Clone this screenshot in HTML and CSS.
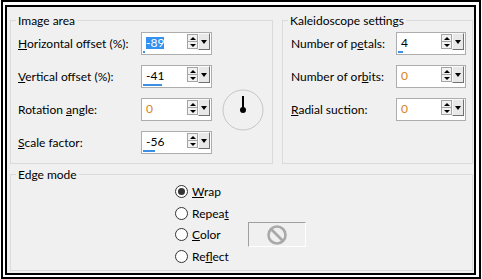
FILE: index.html
```html
<!DOCTYPE html>
<html>
<head>
<meta charset="utf-8">
<link rel="stylesheet" href="styles.css">
</head>
<body>
<div class="outer">
  <div class="dialog">
    <div class="top">
      <div class="group img">
        <div class="title">Image area</div>
        <div class="grid img-grid">
          <div class="lbl"><u>H</u>orizontal offset (%):</div>
          <div class="spin"><div class="val"><span class="num sel">-89</span><span class="bar" style="width:2px"></span></div><div class="arrows"><span class="ab up"></span><span class="ab dn"></span></div><span class="drop"></span></div>
          <div class="dial">
            <svg width="42" height="42" viewBox="0 0 42 42"><circle cx="21" cy="21" r="20" fill="none" stroke="#c6c6c6" stroke-width="1"/><line x1="21" y1="7" x2="21" y2="21" stroke="#000" stroke-width="2"/><circle cx="21" cy="21" r="3" fill="#000"/></svg>
          </div>
          <div class="lbl"><u>V</u>ertical offset (%):</div>
          <div class="spin"><div class="val"><span class="num">-41</span><span class="bar" style="width:19px"></span></div><div class="arrows"><span class="ab up"></span><span class="ab dn"></span></div><span class="drop"></span></div>
          <div class="lbl">Rotation <u>a</u>ngle:</div>
          <div class="spin"><div class="val"><span class="num zero">0</span></div><div class="arrows"><span class="ab up"></span><span class="ab dn"></span></div><span class="drop"></span></div>
          <div class="lbl"><u>S</u>cale factor:</div>
          <div class="spin"><div class="val"><span class="num">-56</span><span class="bar" style="width:12px"></span></div><div class="arrows"><span class="ab up"></span><span class="ab dn"></span></div><span class="drop"></span></div>
        </div>
      </div>
      <div class="group kal">
        <div class="title">Kaleidoscope settings</div>
        <div class="grid kal-grid">
          <div class="lbl">Number of p<u>e</u>tals:</div>
          <div class="spin"><div class="val"><span class="num">4</span><span class="bar" style="width:5px"></span></div><div class="arrows"><span class="ab up"></span><span class="ab dn"></span></div><span class="drop"></span></div>
          <div class="lbl">Number of or<u>b</u>its:</div>
          <div class="spin"><div class="val"><span class="num zero">0</span></div><div class="arrows"><span class="ab up"></span><span class="ab dn"></span></div><span class="drop"></span></div>
          <div class="lbl"><u>R</u>adial suction:</div>
          <div class="spin"><div class="val"><span class="num zero">0</span></div><div class="arrows"><span class="ab up"></span><span class="ab dn"></span></div><span class="drop"></span></div>
        </div>
      </div>
    </div>
    <div class="group edge">
      <div class="title">Edge mode</div>
      <div class="radios">
        <div class="radio r1"><span class="rb on"></span><span><u>W</u>rap</span></div>
        <div class="radio r2"><span class="rb"></span><span>Repea<u>t</u></span></div>
        <div class="radio r3"><span class="rb"></span><span><u>C</u>olor</span></div>
        <div class="swatch">
          <svg width="22" height="22" viewBox="0 0 22 22"><circle cx="11" cy="11" r="8.5" fill="none" stroke="#a9a9a9" stroke-width="2.6"/><line x1="5" y1="5" x2="17" y2="17" stroke="#a9a9a9" stroke-width="2.6"/></svg>
        </div>
        <div class="radio r4"><span class="rb"></span><span>Re<u>f</u>lect</span></div>
      </div>
    </div>
  </div>
</div>
</body>
</html>
```
FILE: styles.css
```css
* { box-sizing: border-box; }
html, body { margin: 0; background: #fff; }
body {
  font-family: Lato, "Noto Sans", sans-serif;
  font-size: 12px;
  color: #000;
  width: 482px;
  height: 279px;
  overflow: hidden;
}
.outer {
  margin: 0 1px;
  height: 279px;
  border: 2px solid #000;
  padding: 3px 3px 2px 2px;
}
.dialog {
  height: 100%;
  border: 2px solid #000;
  background: #f0f0f0;
  padding: 13px 1px 2px 3px;
  display: flex;
  flex-direction: column;
  gap: 10px;
}
.top { display: flex; gap: 9px; }
.group {
  border: 1px solid #dadada;
  padding-bottom: 9px;
}
.img { width: 263px; }
.kal { flex: 1; }
.edge { flex: 1; padding-bottom: 0; }
.title {
  margin-top: -8px;
  margin-left: 5px;
  padding: 0 2px;
  width: fit-content;
  height: 15px;
  line-height: 15px;
  background: #f0f0f0;
}
.grid {
  display: grid;
  grid-auto-rows: 23px;
  row-gap: 10px;
  margin-top: 4px;
}
.img-grid { padding-left: 7px; grid-template-columns: 123px 71px auto; }
.kal-grid { padding-left: 8px; grid-template-columns: 105px 70px; }
.lbl { grid-column: 1; align-self: center; white-space: nowrap; }
.dial {
  grid-column: 3;
  grid-row: 2 / span 3;
  align-self: center;
  margin-left: 10px;
  display: flex;
}
.spin {
  grid-column: 2;
  display: flex;
  align-items: flex-start;
  height: 23px;
  border: 1px solid #adadad;
  background: #fff;
  padding: 0 1px;
}
.val {
  flex: 1;
  height: 100%;
  display: flex;
  flex-direction: column;
  align-items: flex-start;
}
.num {
  margin-top: 4px;
  margin-left: 3px;
  line-height: 12px;
  height: 12px;
}
.num.sel { background: #3391f0; color: #fff; }
.num.zero { color: #d9821c; }
.bar {
  margin-top: auto;
  margin-bottom: 1px;
  height: 2px;
  background: #3c8fe2;
}
.arrows {
  width: 11px;
  margin-top: 1px;
  display: flex;
  flex-direction: column;
}
.ab {
  display: flex;
  align-items: center;
  justify-content: center;
  border: 1px solid #a4a4a4;
  background: #f2f2f2;
}
.ab.up { height: 8px; }
.ab.dn { height: 7px; border-top: none; }
.ab.up::after {
  content: "";
  border-left: 3px solid transparent;
  border-right: 3px solid transparent;
  border-bottom: 3px solid #000;
}
.ab.dn::after {
  content: "";
  border-left: 3px solid transparent;
  border-right: 3px solid transparent;
  border-top: 3px solid #000;
}
.drop {
  width: 12px;
  height: 17px;
  display: flex;
  align-items: center;
  justify-content: center;
  background: #e8e8e8;
  border-top: 1px solid #fafafa;
  border-left: 1px solid #fafafa;
  border-right: 1px solid #707070;
  border-bottom: 1px solid #707070;
}
.drop::after {
  content: "";
  border-left: 3px solid transparent;
  border-right: 3px solid transparent;
  border-top: 4px solid #000;
}
.radios {
  display: grid;
  grid-template-columns: 73px 58px;
  grid-auto-rows: 21.5px;
  margin-left: 164px;
  margin-top: -1px;
}
.radio {
  grid-column: 1;
  display: flex;
  align-items: center;
  gap: 4px;
  white-space: nowrap;
}
.r1 { grid-row: 1; }
.r2 { grid-row: 2; }
.r3 { grid-row: 3; }
.r4 { grid-row: 4; }
.rb {
  width: 13px;
  height: 13px;
  flex: none;
  border: 1px solid #333;
  border-radius: 50%;
  background: #fff;
  display: flex;
  align-items: center;
  justify-content: center;
}
.rb.on::after {
  content: "";
  width: 7px;
  height: 7px;
  border-radius: 50%;
  background: #333;
}
.swatch {
  grid-column: 2;
  grid-row: 3;
  align-self: center;
  height: 25px;
  border-top: 1px solid #a0a0a0;
  border-left: 1px solid #a0a0a0;
  border-right: 1px solid #fff;
  border-bottom: 1px solid #fff;
  background: #f0f0f0;
  display: flex;
  align-items: center;
  justify-content: center;
}
```
